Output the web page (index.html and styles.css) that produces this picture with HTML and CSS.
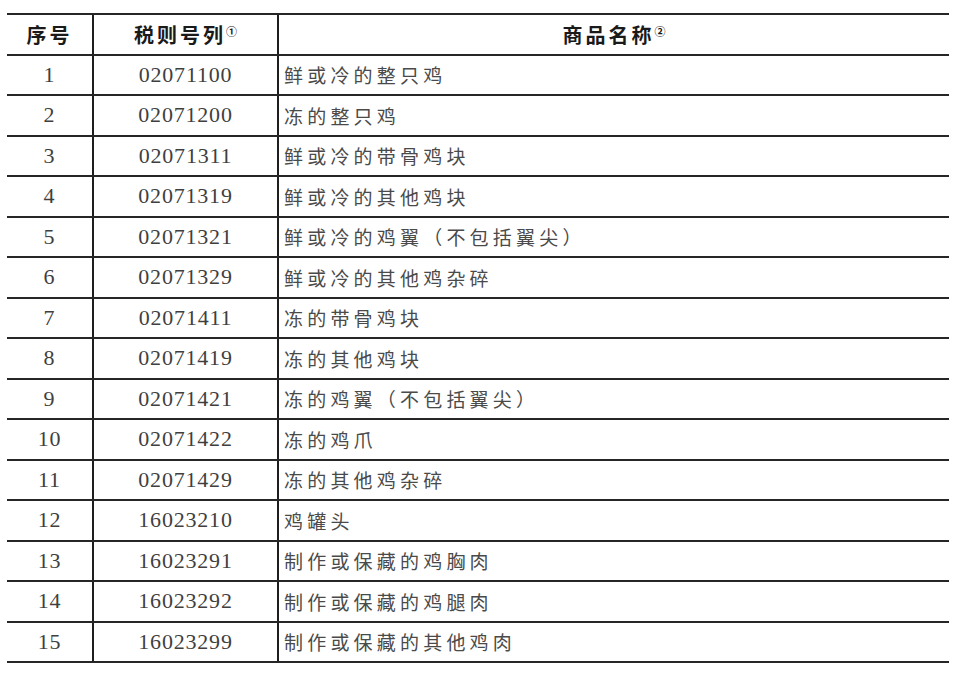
FILE: index.html
```html
<!DOCTYPE html>
<html lang="zh">
<head>
<meta charset="utf-8">
<title>鸡肉产品税则号列</title>
<link rel="stylesheet" href="styles.css">
</head>
<body>
<table class="tariff">
  <thead>
    <tr>
      <th class="c-no">序号</th>
      <th class="c-code">税则号列<sup class="note">①</sup></th>
      <th class="c-name">商品名称<sup class="note">②</sup></th>
    </tr>
  </thead>
  <tbody>
    <tr><td class="c-no">1</td><td class="c-code">02071100</td><td class="c-name">鲜或冷的整只鸡</td></tr>
    <tr><td class="c-no">2</td><td class="c-code">02071200</td><td class="c-name">冻的整只鸡</td></tr>
    <tr><td class="c-no">3</td><td class="c-code">02071311</td><td class="c-name">鲜或冷的带骨鸡块</td></tr>
    <tr><td class="c-no">4</td><td class="c-code">02071319</td><td class="c-name">鲜或冷的其他鸡块</td></tr>
    <tr><td class="c-no">5</td><td class="c-code">02071321</td><td class="c-name">鲜或冷的鸡翼（不包括翼尖）</td></tr>
    <tr><td class="c-no">6</td><td class="c-code">02071329</td><td class="c-name">鲜或冷的其他鸡杂碎</td></tr>
    <tr><td class="c-no">7</td><td class="c-code">02071411</td><td class="c-name">冻的带骨鸡块</td></tr>
    <tr><td class="c-no">8</td><td class="c-code">02071419</td><td class="c-name">冻的其他鸡块</td></tr>
    <tr><td class="c-no">9</td><td class="c-code">02071421</td><td class="c-name">冻的鸡翼（不包括翼尖）</td></tr>
    <tr><td class="c-no">10</td><td class="c-code">02071422</td><td class="c-name">冻的鸡爪</td></tr>
    <tr><td class="c-no">11</td><td class="c-code">02071429</td><td class="c-name">冻的其他鸡杂碎</td></tr>
    <tr><td class="c-no">12</td><td class="c-code">16023210</td><td class="c-name">鸡罐头</td></tr>
    <tr><td class="c-no">13</td><td class="c-code">16023291</td><td class="c-name">制作或保藏的鸡胸肉</td></tr>
    <tr><td class="c-no">14</td><td class="c-code">16023292</td><td class="c-name">制作或保藏的鸡腿肉</td></tr>
    <tr><td class="c-no">15</td><td class="c-code">16023299</td><td class="c-name">制作或保藏的其他鸡肉</td></tr>
  </tbody>
</table>
</body>
</html>
```

FILE: styles.css
```css
html, body {
  margin: 0;
  padding: 0;
  background: #ffffff;
}

body {
  padding: 13px 0 0 7px;
}

.tariff {
  width: 942px;
  border-collapse: collapse;
  table-layout: fixed;
  font-family: "Liberation Serif", "Noto Sans CJK SC", serif;
}

.tariff th,
.tariff td {
  height: 38.5px;
  padding: 0;
  border-top: 2px solid #262626;
  border-bottom: 2px solid #262626;
  vertical-align: middle;
}

.tariff .c-no {
  width: 85px;
  text-align: center;
}

.tariff .c-code {
  width: 183px;
  text-align: center;
  border-left: 2px solid #1e1e1e;
}

.tariff .c-name {
  border-left: 2px solid #1e1e1e;
}

.tariff th {
  font-family: "Noto Sans CJK SC", sans-serif;
  font-weight: 700;
  font-size: 20px;
  letter-spacing: 3px;
  color: #1a1a1a;
}

.tariff th.c-name {
  text-align: center;
}

.note {
  font-size: 11px;
  letter-spacing: 0;
  vertical-align: 7px;
  line-height: 0;
  font-weight: 700;
}

.tariff td {
  font-size: 22px;
  color: #3f3f3f;
  letter-spacing: 0.8px;
}

.tariff td.c-name {
  font-family: "Noto Sans CJK SC", sans-serif;
  font-size: 19px;
  letter-spacing: 4.2px;
  padding-left: 5px;
  color: #4a4a4a;
}
```
